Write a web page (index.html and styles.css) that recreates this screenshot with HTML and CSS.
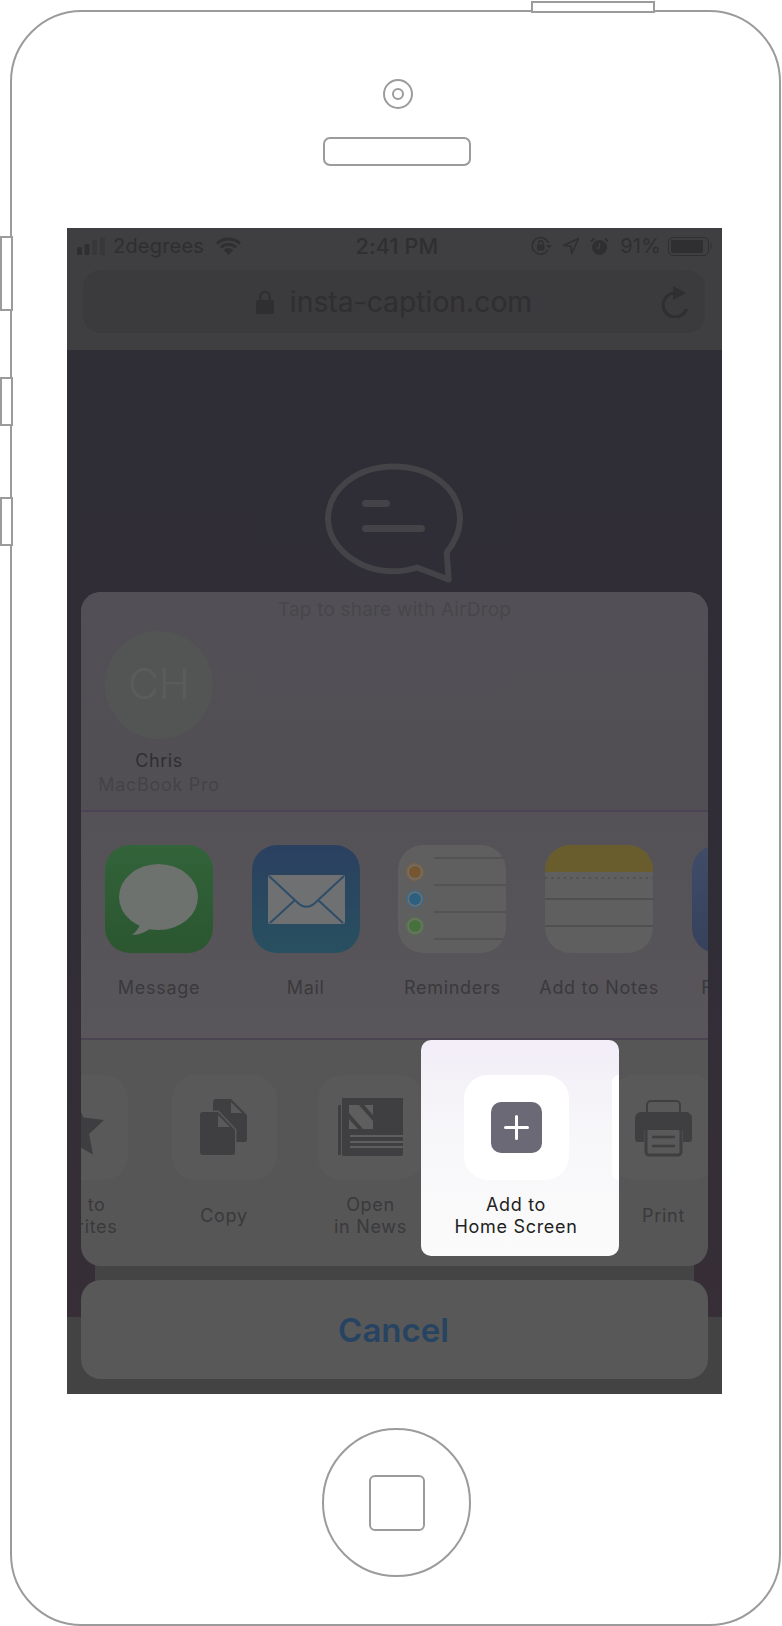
FILE: index.html
```html
<!DOCTYPE html>
<html lang="en">
<head>
<meta charset="utf-8">
<title>Add to Home Screen</title>
<link rel="stylesheet" href="styles.css">
</head>
<body>
<div class="phone">
  <span class="hw hw-top"></span>
  <span class="hw hw-side hw-mute"></span>
  <span class="hw hw-side hw-up"></span>
  <span class="hw hw-side hw-down"></span>

  <div class="camera"><span class="lens"></span></div>
  <div class="speaker"></div>

  <div class="screen">
    <header class="browser-bar">
      <div class="status">
        <div class="status-left">
          <svg class="signal" width="29" height="18" viewBox="0 0 29 18"><rect x="0" y="10" width="5" height="8" rx="1.5" class="ink"/><rect x="7.5" y="7" width="5" height="11" rx="1.5" class="ink"/><rect x="15" y="3" width="5" height="15" rx="1.5" class="ink-faint"/><rect x="23" y="0" width="5" height="18" rx="1.5" class="ink-faint"/></svg>
          <span>2degrees</span>
          <svg class="wifi" width="25" height="18" viewBox="0 0 25 18"><path d="M1 6.5C7.5.5 17.500.5 24 6.500M4.800 10.300c4.500-4 10.900-4 15.400 0M8.500 14c2.400-1.900 5.600-1.900 8 0" fill="none" stroke="#2f2e30" stroke-width="2.800"/><path d="M9.800 14.800 12.500 18l2.700-3.200c-1.600-1.100-3.800-1.100-5.400 0z" class="ink"/></svg>
        </div>
        <div class="status-time">2:41 PM</div>
        <div class="status-right">
          <svg width="21" height="20" viewBox="0 0 21 20"><path d="M17 13.500A8.300 8.300 0 1 1 17.300 7" fill="none" stroke="#2f2e30" stroke-width="1.500"/><path d="M15 9h6l-3 3.500z" class="ink"/><rect x="6" y="8.500" width="7.500" height="6" rx="1" class="ink"/><path d="M7.500 9V7a2.200 2.200 0 0 1 4.500 0v2" fill="none" stroke="#2f2e30" stroke-width="1.300"/></svg>
          <svg class="loc" width="18" height="18" viewBox="0 0 18 18"><path d="M16.500 1.500 1.500 8.500l7.500.7.700 7.500z" fill="none" stroke="#2f2e30" stroke-width="1.500" stroke-linejoin="round"/></svg>
          <svg class="alarm" width="19" height="19" viewBox="0 0 19 19"><circle cx="9.500" cy="10.500" r="7.500" class="ink"/><path d="M9.500 6v5H6" fill="none" stroke="#3f3e40" stroke-width="1.300"/><path d="M1 4.500 4 1.500M18 4.500 15 1.500" stroke="#2f2e30" stroke-width="2"/></svg>
          <span class="pct">91%</span>
          <div class="battery"><span class="battery-fill"></span></div>
          <span class="battery-nub"></span>
        </div>
      </div>
      <div class="url-field">
        <span></span>
        <div class="url-text">
          <svg width="18" height="24" viewBox="0 0 18 24"><path d="M4.300 11V6.500a4.700 4.700 0 0 1 9.400 0V11" fill="none" stroke="#2f2e30" stroke-width="2"/><rect y="10" width="18" height="14" rx="2.500" class="ink"/></svg>
          <span>insta-caption.com</span>
        </div>
        <svg class="reload" width="28" height="32" viewBox="0 0 28 32"><path d="M15 7A12 12 0 1 0 25.500 23" fill="none" stroke="#2f2e30" stroke-width="3"/><path d="M12 0l13 7-13 7z" class="ink"/></svg>
      </div>
    </header>

    <main class="page">
      <svg class="bubble" width="138" height="120" viewBox="0 0 138 120">
        <path d="M92 104.500C84.500 107 76 108.300 68 108.300 35 108.300 4 86 3 56 3 26 32 3.500 69 3.500s66 22.500 66 52.500c0 12-5 23-13.300 33.500l2 27z" fill="none" stroke="#444347" stroke-width="6" stroke-linejoin="round"/>
        <rect x="37" y="37" width="28" height="7" rx="3.500" fill="#444347"/>
        <rect x="37" y="62" width="63" height="7" rx="3.500" fill="#444347"/>
      </svg>
      <div class="page-band"></div>
    </main>
    <footer class="tool-bar"></footer>

    <section class="sheet">
      <div class="sheet-card">
        <div class="sec sec-airdrop">
          <p class="airdrop-hint">Tap to share with AirDrop</p>
          <div class="person">
            <div class="avatar"><span class="avatar-text">CH</span></div>
            <div class="person-name">Chris</div>
            <div class="person-device">MacBook Pro</div>
          </div>
        </div>

        <div class="sec sec-apps">
          <div class="app">
            <div class="app-icon green">
              <svg width="108" height="108" viewBox="0 0 108 108"><ellipse cx="53.500" cy="52" rx="39.500" ry="33" fill="#6d726e"/><path d="M36 76c-1 6-5 11-9 14 7 0 14-3 19-7z" fill="#6d726e"/></svg>
            </div>
            <span class="app-label">Message</span>
          </div>
          <div class="app">
            <div class="app-icon blue">
              <svg width="108" height="108" viewBox="0 0 108 108"><rect x="16" y="30" width="77" height="49" rx="2" fill="#6e7072"/><path d="M17 31l29 27c5 5 12 5 17 0l29-27M18 78l25-23M91 78 66 55" fill="none" stroke="#2d4d68" stroke-width="2"/></svg>
            </div>
            <span class="app-label">Mail</span>
          </div>
          <div class="app">
            <div class="app-icon paper">
              <svg width="108" height="108" viewBox="0 0 108 108">
                <path d="M36 13h72M36 40h72M36 67h72M36 94h72" stroke="#515051" stroke-width="1.500"/>
                <circle cx="17" cy="27" r="9" fill="#7e6142"/>
                <circle cx="17" cy="27" r="7.500" fill="#6f6e6c"/>
                <circle cx="17" cy="27" r="6" fill="#76562f"/>
                <circle cx="17" cy="54" r="9" fill="#3f6a85"/>
                <circle cx="17" cy="54" r="7.500" fill="#6c7073"/>
                <circle cx="17" cy="54" r="6" fill="#2c5f80"/>
                <circle cx="17" cy="81" r="9" fill="#55774a"/>
                <circle cx="17" cy="81" r="7.500" fill="#6e716c"/>
                <circle cx="17" cy="81" r="6" fill="#46713a"/>
              </svg>
            </div>
            <span class="app-label">Reminders</span>
          </div>
          <div class="app">
            <div class="app-icon paper">
              <svg width="108" height="108" viewBox="0 0 108 108">
                <rect width="108" height="27" fill="#695d2e"/>
                <path d="M0 33h108" stroke="#505050" stroke-width="2" stroke-dasharray="2 4.300"/>
                <path d="M0 54h108M0 81h108" stroke="#4c4c4c" stroke-width="1.500"/>
              </svg>
            </div>
            <span class="app-label">Add to Notes</span>
          </div>
          <div class="app">
            <div class="app-icon navy"></div>
            <span class="app-label">Facebook</span>
          </div>
        </div>

        <div class="sec sec-actions">
          <div class="action action-fav">
            <div class="action-icon">
              <svg width="105" height="105" viewBox="0 0 105 105"><path d="M52 24l8.500 18.500 20.500 2.500-15 14 4 20.500-18-10-18 10 4-20.500-15-14 20.500-2.500z" fill="#3e3e40"/></svg>
            </div>
            <div class="action-label">Add to<br>Favorites</div>
          </div>
          <div class="action">
            <div class="action-icon">
              <svg width="105" height="105" viewBox="0 0 105 105">
                <path d="M44 24h15l16 16v24a3 3 0 0 1-3 3H44a3 3 0 0 1-3-3V27a3 3 0 0 1 3-3z" fill="#3f3e40"/>
                <path d="M59 27v11h11z" fill="#595959"/>
                <path d="M31 37h15l17 18v22a3 3 0 0 1-3 3H31a3 3 0 0 1-3-3V40a3 3 0 0 1 3-3z" fill="#3f3e40" stroke="#595959" stroke-width="3" paint-order="stroke"/>
                <path d="M46 40v12h12z" fill="#595959"/>
              </svg>
            </div>
            <div class="action-label">Copy</div>
          </div>
          <div class="action">
            <div class="action-icon">
              <svg width="105" height="105" viewBox="0 0 105 105">
                <rect x="20" y="30" width="3" height="50" rx="1" fill="#3f3e40"/>
                <path d="M24 23h61v56a2 2 0 0 1-2 2H26a2 2 0 0 1-2-2z" fill="#3f3e40"/>
                <path d="M31 30h10l14 16v8H45L31 38zM46 30h9v10zM31 44l9 10h-9z" fill="#5e5e5e"/>
                <path d="M32 61h53M32 67h53M32 72h53" stroke="#5e5e5e" stroke-width="2"/>
              </svg>
            </div>
            <div class="action-label">Open<br>in News</div>
          </div>
          <div class="action action-active">
            <div class="action-icon">
              <svg width="105" height="105" viewBox="0 0 105 105"><rect x="27" y="27" width="51" height="51" rx="10" fill="#6a6975"/><path d="M52.500 41.500v22M41.500 52.500h22" stroke="#fff" stroke-width="3" stroke-linecap="round"/></svg>
            </div>
            <div class="action-label">Add to<br>Home Screen</div>
          </div>
          <div class="action">
            <div class="action-icon">
              <svg width="105" height="105" viewBox="0 0 105 105">
                <path d="M36 38V30a4 4 0 0 1 4-4h25a4 4 0 0 1 4 4v8" fill="none" stroke="#3f3e40" stroke-width="2"/>
                <path d="M30 37h45a6 6 0 0 1 6 6v21a3 3 0 0 1-3 3h-6V55H33v12h-6a3 3 0 0 1-3-3V43a6 6 0 0 1 6-6z" fill="#3f3e40"/>
                <rect x="35" y="53" width="35" height="27" rx="3" fill="none" stroke="#3f3e40" stroke-width="3"/>
                <path d="M41 62h23M41 71h23" stroke="#3f3e40" stroke-width="2.500"/>
              </svg>
            </div>
            <div class="action-label">Print</div>
          </div>
        </div>
      </div>
      <button class="cancel" type="button">Cancel</button>
    </section>
  </div>

  <div class="home"><span class="home-square"></span></div>
</div>
</body>
</html>
```

FILE: styles.css
```css
* { box-sizing: border-box; }

html, body { margin: 0; padding: 0; }

body {
  width: 782px;
  height: 1626px;
  overflow: hidden;
  background: #fff;
  font-family: Inter, "Liberation Sans", sans-serif;
  color: #2f2e30;
}

.ink { fill: #2f2e30; }
.ink-faint { fill: #38373a; }

/* ---------- wireframe phone ---------- */
.phone {
  position: relative;
  width: 771px;
  height: 1616px;
  margin: 10px 0 0 10px;
  border: 2px solid #9b9b9b;
  border-radius: 72px;
  background: #fff;
  display: flex;
  flex-direction: column;
  align-items: flex-start;
}

.hw {
  position: absolute;
  border: 2px solid #9b9b9b;
  background: #fff;
}
.hw-top { top: -11px; left: 519px; width: 124px; height: 12px; }
.hw-side { left: -12px; width: 13px; }
.hw-mute { top: 224px; height: 75px; }
.hw-up { top: 365px; height: 49px; }
.hw-down { top: 485px; height: 49px; }

.camera {
  width: 30px;
  height: 30px;
  margin: 67px 0 0 371px;
  border: 2px solid #9b9b9b;
  border-radius: 50%;
  display: flex;
  align-items: center;
  justify-content: center;
}
.lens {
  width: 12px;
  height: 12px;
  border: 2px solid #9b9b9b;
  border-radius: 50%;
}

.speaker {
  width: 148px;
  height: 29px;
  margin: 28px 0 0 311px;
  border: 2px solid #9b9b9b;
  border-radius: 7px;
}

.home {
  width: 149px;
  height: 149px;
  margin: 34px 0 0 310px;
  border: 2px solid #9b9b9b;
  border-radius: 50%;
  display: flex;
  align-items: center;
  justify-content: center;
}
.home-square {
  width: 56px;
  height: 56px;
  border: 2px solid #9b9b9b;
  border-radius: 6px;
}

/* ---------- screen ---------- */
.screen {
  position: relative;
  width: 655px;
  height: 1166px;
  margin: 62px 0 0 55px;
  overflow: hidden;
  display: flex;
  flex-direction: column;
  background: #302e37;
}

.browser-bar {
  height: 122px;
  background: #3f3e40;
}

.status {
  height: 36px;
  display: grid;
  grid-template-columns: 275px 90px 1fr;
  align-items: center;
  padding: 0 10px 0 10px;
  font-size: 20px;
  letter-spacing: 0.2px;
}
.status-left { display: flex; align-items: center; gap: 7px; }
.wifi { margin-left: 5px; }
.status-time { text-align: center; font-weight: 500; white-space: nowrap; font-size: 21.500px; }
.status-right { display: flex; align-items: center; justify-content: flex-end; gap: 10px; }
.pct { margin-left: 1px; }
.battery {
  width: 41px;
  height: 19px;
  margin-left: -3px;
  border: 1px solid #2f2e30;
  border-radius: 5px;
  padding: 2px;
}
.battery-fill {
  display: block;
  width: 32px;
  height: 100%;
  background: #2f2e30;
  border-radius: 2px;
}
.battery-nub {
  width: 2px;
  height: 6px;
  margin-left: -9px;
  background: #38373a;
  border-radius: 0 2px 2px 0;
}

.url-field {
  width: 622px;
  height: 63px;
  margin: 6px 0 0 16px;
  background: #3b3a3c;
  border-radius: 18px;
  display: grid;
  grid-template-columns: 1fr auto 1fr;
  align-items: center;
}
.url-text {
  display: flex;
  align-items: center;
  gap: 16px;
  font-size: 28.300px;
  white-space: nowrap;
}
.reload { justify-self: end; margin-right: 16px; }

.page {
  flex: 1;
  display: flex;
  flex-direction: column;
  background: linear-gradient(180deg, #2f2d36 0%, #302d36 55%, #352e37 85%, #372e37 100%);
}
.bubble { margin: 113px 0 0 258px; display: block; }
.page-band {
  height: 70px;
  margin: auto 28px 0;
  background: #444444;
}
.tool-bar { height: 77px; background: #434343; }

/* ---------- share sheet ---------- */
.sheet {
  position: absolute;
  top: 364px;
  left: 14px;
  width: 627px;
  display: flex;
  flex-direction: column;
  gap: 14px;
}

.sheet-card {
  border-radius: 20px;
  overflow: hidden;
  background: #565656;
}

.sec { overflow: hidden; }

.sec-airdrop {
  height: 220px;
  background: linear-gradient(180deg, #525056 0%, #514f54 100%);
  border-bottom: 2px solid #4b4356;
}
.airdrop-hint {
  margin: 0;
  padding-top: 6px;
  line-height: 24px;
  font-size: 19px;
  letter-spacing: 0.2px;
  text-align: center;
  color: #47464b;
}
.person {
  width: 108px;
  margin: 9px 0 0 24px;
  display: flex;
  flex-direction: column;
  align-items: center;
}
.avatar {
  width: 108px;
  height: 108px;
  border-radius: 50%;
  background: #535554;
  color: #5a5c5c;
  font-size: 42px;
  font-weight: 300;
  display: flex;
  align-items: center;
  justify-content: center;
}
.avatar-text { margin-top: -4px; }
.person-name {
  margin-top: 10px;
  line-height: 24px;
  font-size: 18px;
  letter-spacing: 0.6px;
  color: #2f2e31;
}
.person-device {
  line-height: 23px;
  font-size: 18px;
  letter-spacing: 0.7px;
  white-space: nowrap;
  color: #444347;
}

.sec-apps {
  height: 228px;
  padding: 33px 0 0 24px;
  display: flex;
  gap: 38.700px;
  background: linear-gradient(180deg, #545256 0%, #58565a 100%);
  border-bottom: 2px solid #4a4550;
}
.app {
  flex: 0 0 108px;
  min-width: 0;
  display: flex;
  flex-direction: column;
  align-items: center;
}
.app-icon {
  flex: none;
  width: 108px;
  height: 108px;
  border-radius: 25px;
  overflow: hidden;
}
.app-icon svg { display: block; }
.green { background: linear-gradient(180deg, #326339 0%, #2b5630 100%); }
.blue { background: linear-gradient(180deg, #2b4060 0%, #285060 100%); }
.paper { background: #5f5f5f; }
.navy { background: linear-gradient(180deg, #404c68 0%, #36415c 100%); }
.app-label {
  margin-top: 23px;
  line-height: 24px;
  font-size: 18px;
  letter-spacing: 0.7px;
  white-space: nowrap;
  color: #3a393c;
}

.sec-actions {
  height: 226px;
  display: flex;
  align-items: flex-start;
  gap: 41.5px;
  margin-left: -56px;
}
.action {
  flex: 0 0 105px;
  min-width: 0;
  height: 216px;
  padding-top: 35px;
  display: flex;
  flex-direction: column;
  align-items: center;
}
.action-fav { margin: 0 2px 0 -2px; }
.action-icon {
  flex: none;
  width: 105px;
  height: 105px;
  border-radius: 24px;
  background: #595959;
}
.action-icon svg { display: block; }
.action-label {
  height: 45px;
  margin-top: 13.500px;
  line-height: 22.500px;
  font-size: 18px;
  letter-spacing: 0.7px;
  text-align: center;
  white-space: nowrap;
  color: #3a393c;
  display: flex;
  align-items: center;
}

.action-active {
  position: relative;
  flex: 0 0 198px;
  margin: 0 -49.500px 0 -43.500px;
  padding-right: 8px;
  border-radius: 10px;
  background: linear-gradient(180deg, #f2edf7 0%, #f7f6f9 40%, #fbfbfb 100%);
}
.action-active::after {
  content: "";
  position: absolute;
  top: 35px;
  right: 0;
  width: 7px;
  height: 105px;
  border-radius: 10px 0 0 10px;
  background: #fff;
}
.action-active .action-icon { background: #fff; }
.action-active .action-label { color: #222; }

.cancel {
  height: 99px;
  padding: 0 2px 0 0;
  border: 0;
  border-radius: 20px;
  background: #585858;
  font-family: inherit;
  font-size: 33px;
  font-weight: 600;
  color: #264462;
}
```
